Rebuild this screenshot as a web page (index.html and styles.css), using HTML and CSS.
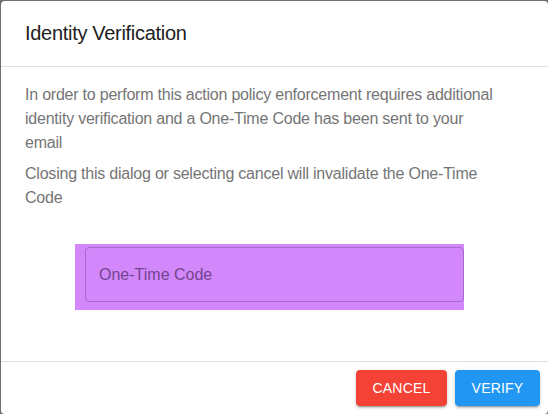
FILE: index.html
```html
<!DOCTYPE html>
<html lang="en">
<head>
<meta charset="utf-8">
<title>Identity Verification</title>
<link rel="stylesheet" href="styles.css">
</head>
<body>
<div class="dialog">
  <div class="dialog-header">
    <h2 class="dialog-title">Identity Verification</h2>
  </div>
  <div class="dialog-body">
    <p class="dialog-text">In order to perform this action policy enforcement requires additional identity verification and a One-Time Code has been sent to your email</p>
    <p class="dialog-text">Closing this dialog or selecting cancel will invalidate the One-Time Code</p>
    <div class="code-highlight">
      <div class="code-input">One-Time Code</div>
    </div>
  </div>
  <div class="dialog-footer">
    <button class="btn btn-cancel">Cancel</button>
    <button class="btn btn-verify">Verify</button>
  </div>
</div>
</body>
</html>
```

FILE: styles.css
```css
html, body {
  margin: 0;
  padding: 0;
}
body {
  width: 548px;
  height: 414px;
  overflow: hidden;
  background: #6f6f6f;
  padding: 1px 0 0 1px;
  box-sizing: border-box;
  font-family: "Liberation Sans", Arial, sans-serif;
}
.dialog {
  width: 547px;
  height: 413px;
  background: #ffffff;
  border-radius: 4px;
  display: flex;
  flex-direction: column;
  box-sizing: border-box;
}
.dialog-header {
  height: 66px;
  border-bottom: 1px solid #e0e0e0;
  box-sizing: border-box;
  display: flex;
  align-items: center;
  padding: 0 24px;
}
.dialog-title {
  margin: 0;
  font-size: 20px;
  font-weight: 400;
  letter-spacing: -0.3px;
  color: #212121;
}
.dialog-body {
  flex: 1;
  padding: 16px 44px 0 24px;
}
.dialog-text {
  margin: 0 0 7px;
  font-size: 16px;
  line-height: 24px;
  letter-spacing: -0.22px;
  color: #757575;
}
.code-highlight {
  margin: 34px 0 0 50px;
  width: 389px;
  background: #d287fb;
  padding: 3px 0 8px 10px;
  box-sizing: border-box;
}
.code-input {
  height: 55px;
  border: 1px solid #a46bc9;
  border-radius: 4px;
  box-sizing: border-box;
  display: flex;
  align-items: center;
  padding-left: 13px;
  font-size: 16px;
  color: #74448f;
}
.dialog-footer {
  height: 53px;
  border-top: 1px solid #e0e0e0;
  box-sizing: border-box;
  display: flex;
  justify-content: flex-end;
  align-items: flex-start;
  gap: 8px;
  padding: 8px 8px 0 0;
}
.btn {
  height: 36px;
  border: none;
  border-radius: 4px;
  padding: 0 16px;
  font-family: "Liberation Sans", Arial, sans-serif;
  font-size: 14px;
  font-weight: 400;
  letter-spacing: 0.2px;
  text-transform: uppercase;
  color: #ffffff;
  box-shadow: 0 3px 1px -2px rgba(0,0,0,0.2), 0 2px 2px 0 rgba(0,0,0,0.14), 0 1px 5px 0 rgba(0,0,0,0.12);
}
.btn-cancel {
  width: 91px;
  background: #f44336;
}
.btn-verify {
  width: 85px;
  background: #2196f3;
}
```
